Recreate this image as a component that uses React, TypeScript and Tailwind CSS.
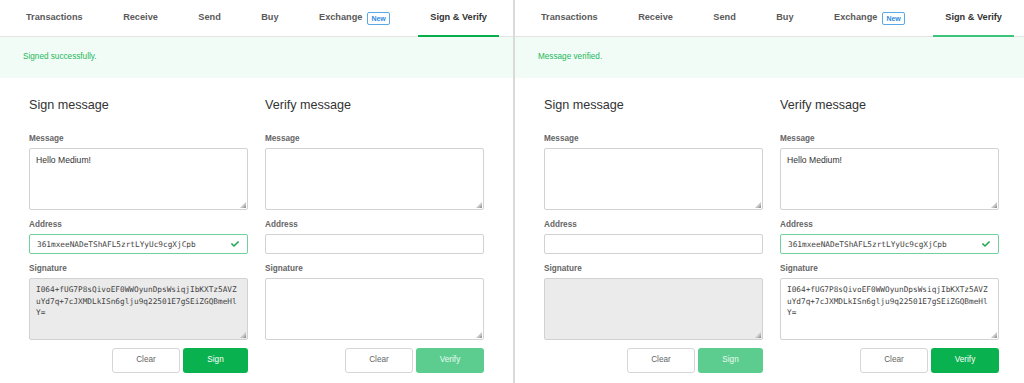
import { FaCheck } from 'react-icons/fa'

const ADDRESS = '361mxeeNADeTShAFL5zrtLYyUc9cgXjCpb'
const SIGNATURE =
    'I064+fUG7P8sQivoEF0WWOyunDpsWsiqjIbKXTz5AVZ\nuYd7q+7cJXMDLkISn6glju9q22501E7gSEiZGQBmeHl\nY='

const tabs = ['Transactions', 'Receive', 'Send', 'Buy', 'Exchange', 'Sign & Verify']

const Label = ({ text, first }: { text: string; first?: boolean }) => (
    <div className={`${first ? 'mt-[21px]' : 'mt-[10px]'} mb-[4px] text-[8.2px] leading-[10px] font-bold text-[#666]`}>
        {text}
    </div>
)

// little grey resize grip, like the one in the screenshot
const Grip = () => (
    <svg className="absolute right-[2px] bottom-[2px]" width="6" height="6" viewBox="0 0 6 6">
        <path d="M6 0 L6 6 L0 6 Z" fill="#c4c4c4" />
        <path d="M6 3 L6 6 L3 6 Z" fill="#9a9a9a" />
    </svg>
)

const Area = ({ value, grey, mono }: { value: string; grey?: boolean; mono?: boolean }) => (
    <div className="relative">
        <textarea
            readOnly
            value={value}
            className={`block w-full h-[62px] rounded-[2px] border border-[#d2d2d2] px-[6px] pt-[5px] outline-none resize-none ${
                grey ? 'bg-[#ebebeb]' : 'bg-white'
            } ${
                mono
                    ? "font-['DejaVu_Sans_Mono',monospace] text-[7.75px] leading-[11.5px] text-[#444] whitespace-pre"
                    : 'text-[8.6px] leading-[11px] text-[#333] pt-[6px]'
            }`}
        />
        <Grip />
    </div>
)

const AddressInput = ({ filled }: { filled: boolean }) => (
    <div className="relative">
        <input
            readOnly
            value={filled ? ADDRESS : ''}
            className={`block w-full h-[20px] rounded-[2px] border px-[7px] outline-none bg-white font-['DejaVu_Sans_Mono',monospace] text-[7.75px] text-[#444] ${
                filled ? 'border-[#6fd29b]' : 'border-[#d2d2d2]'
            }`}
        />
        {filled && <FaCheck className="absolute right-[9px] top-[6px] text-[#1aa94f]" size={8} />}
    </div>
)

const Buttons = ({ action, enabled }: { action: string; enabled: boolean }) => (
    <div className="mt-[8px] flex justify-end gap-[3px]">
        <button className="w-[68px] h-[25px] rounded-[3px] border border-[#d6d6d6] bg-white text-[8.2px] text-[#666]">
            Clear
        </button>
        <button
            className={`${action === 'Sign' ? 'w-[65px]' : 'w-[68px]'} h-[25px] rounded-[3px] text-[8.2px] ${
                enabled ? 'bg-[#0ab14f] text-white' : 'bg-[#5ccd8f] text-[#eafaf1]'
            }`}
        >
            {action}
        </button>
    </div>
)

const Panel = ({ verified }: { verified: boolean }) => (
    <div className="w-[513px] shrink-0 h-full bg-white">
        <nav className="h-[37px] flex justify-between px-[14px] border-b border-[#e4e4e4]">
            {tabs.map((t) => (
                <div
                    key={t}
                    className={`relative flex items-center px-3 text-[9.2px] font-bold ${
                        t === 'Sign & Verify' ? 'text-[#333]' : 'text-[#5a5a5a]'
                    }`}
                >
                    {t}
                    {t === 'Exchange' && (
                        <span className="ml-[5px] rounded-[2px] border border-[#5aa8e6] px-[3px] text-[7px] leading-[11px] font-bold text-[#2d8ae0]">
                            New
                        </span>
                    )}
                    {t === 'Sign & Verify' && (
                        <span
                            className={`absolute left-0 right-0 bottom-[-1px] h-[2px] ${
                                verified ? 'bg-[#3cc47c]' : 'bg-[#06ad48]'
                            }`}
                        />
                    )}
                </div>
            ))}
        </nav>
        <div className="h-[41px] bg-[#f2fcf6] px-[23px] pt-[15px] text-[8.2px] leading-[10px] text-[#22b85a]">
            {verified ? 'Message verified.' : 'Signed successfully.'}
        </div>
        <div className="grid grid-cols-2 gap-x-[17px] px-[29px] pt-[20px]">
            <div>
                <h2 className="text-[12.6px] leading-[15px] text-[#333]">Sign message</h2>
                <Label text="Message" first />
                <Area value={verified ? '' : 'Hello Medium!'} />
                <Label text="Address" />
                <AddressInput filled={!verified} />
                <Label text="Signature" />
                <Area value={verified ? '' : SIGNATURE} grey mono />
                <Buttons action="Sign" enabled={!verified} />
            </div>
            <div>
                <h2 className="text-[12.6px] leading-[15px] text-[#333]">Verify message</h2>
                <Label text="Message" first />
                <Area value={verified ? 'Hello Medium!' : ''} />
                <Label text="Address" />
                <AddressInput filled={verified} />
                <Label text="Signature" />
                <Area value={verified ? SIGNATURE : ''} mono />
                <Buttons action="Verify" enabled={verified} />
            </div>
        </div>
    </div>
)

export default function App() {
    return (
        <div className="h-[383px] w-[1024px] flex overflow-hidden bg-white font-['Liberation_Sans',Arial,sans-serif]">
            <Panel verified={false} />
            <div className="w-[2px] shrink-0 bg-[#dadada]" />
            <Panel verified />
        </div>
    )
}
